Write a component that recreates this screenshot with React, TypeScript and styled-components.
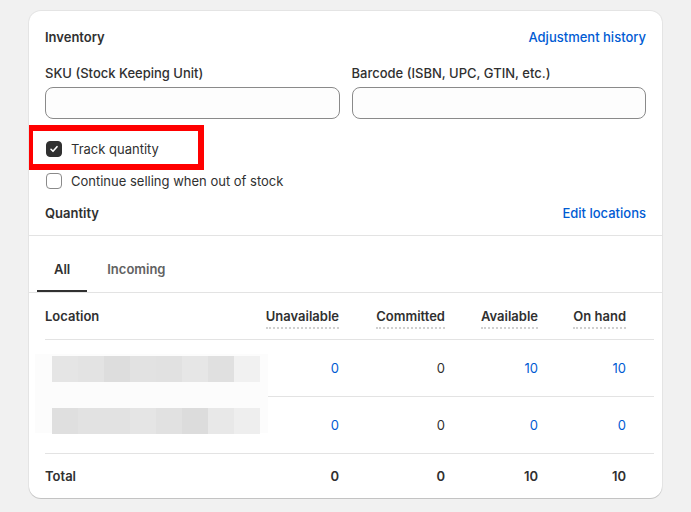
import styled, { createGlobalStyle } from 'styled-components'

const GlobalStyle = createGlobalStyle`
    body {
        margin: 0;
        background: #f1f1f1;
        font-family: Inter, "Noto Sans", sans-serif;
        font-size: 13px;
        line-height: 20px;
        color: #303030;
    }
`

const censorRows = [
    ['#e5e5e5', '#e3e3e3', '#dddddd', '#e2e2e2', '#e1e1e1', '#e6e6e6', '#e0e0e0', '#f1f1f1'],
    ['#dfdfdf', '#e2e2e2', '#e2e2e2', '#e5e5e5', '#e1e1e1', '#dcdcdc', '#e8e8e8', '#eeeeee'],
]

const rows = [
    { unavailable: '0', committed: '0', available: '10', onHand: '10' },
    { unavailable: '0', committed: '0', available: '0', onHand: '0' },
]

const CheckIcon = () => (
    <svg width="12" height="12" viewBox="0 0 12 12" fill="none">
        <path d="M3 6.3l2 2 4-4.6" stroke="#fff" strokeWidth="1.6" strokeLinecap="round" strokeLinejoin="round" />
    </svg>
)

const App = () => {
    return (
        <Page>
            <GlobalStyle />
            <Card>
                <Section>
                    <HeaderRow>
                        <Title>Inventory</Title>
                        <Link href="#">Adjustment history</Link>
                    </HeaderRow>
                    <Fields>
                        <Field>
                            <Label>SKU (Stock Keeping Unit)</Label>
                            <Input />
                        </Field>
                        <Field>
                            <Label>Barcode (ISBN, UPC, GTIN, etc.)</Label>
                            <Input />
                        </Field>
                    </Fields>
                    <CheckRow $first>
                        <Highlight />
                        <Box $checked>
                            <CheckIcon />
                        </Box>
                        Track quantity
                    </CheckRow>
                    <CheckRow>
                        <Box />
                        Continue selling when out of stock
                    </CheckRow>
                    <HeaderRow $spaced>
                        <Title>Quantity</Title>
                        <Link href="#">Edit locations</Link>
                    </HeaderRow>
                </Section>
                <Tabs>
                    <Tab $active>All</Tab>
                    <Tab>Incoming</Tab>
                </Tabs>
                <Table>
                    <HeadRow>
                        <HeadCell $left>Location</HeadCell>
                        <HeadCell><Dotted>Unavailable</Dotted></HeadCell>
                        <HeadCell><Dotted>Committed</Dotted></HeadCell>
                        <HeadCell><Dotted>Available</Dotted></HeadCell>
                        <HeadCell><Dotted>On hand</Dotted></HeadCell>
                    </HeadRow>
                    <Body>
                        <Censor>
                            {censorRows.map((blocks, i) => (
                                <CensorRow key={i} $gap={i > 0}>
                                    {blocks.map((c, j) => (
                                        <Block key={j} $color={c} />
                                    ))}
                                </CensorRow>
                            ))}
                        </Censor>
                        {rows.map((r, i) => (
                            <DataRow key={i}>
                                <Cell />
                                <Cell $link>{r.unavailable}</Cell>
                                <Cell>{r.committed}</Cell>
                                <Cell $link>{r.available}</Cell>
                                <Cell $link>{r.onHand}</Cell>
                            </DataRow>
                        ))}
                    </Body>
                    <TotalRow>
                        <Cell $left>Total</Cell>
                        <Cell>0</Cell>
                        <Cell>0</Cell>
                        <Cell>10</Cell>
                        <Cell>10</Cell>
                    </TotalRow>
                </Table>
            </Card>
        </Page>
    )
}

const Page = styled.div`
    padding: 11px 29px;
`

const Card = styled.div`
    width: 633px;
    background: #fff;
    border-radius: 12px;
    overflow: hidden;
    box-shadow: 0 1px 0 0 rgba(0, 0, 0, 0.14), 0 0 0 1px rgba(0, 0, 0, 0.05);
`

const Section = styled.div`
    padding: 16px 16px 12px;
    border-bottom: 1px solid #e3e3e3;
`

const HeaderRow = styled.div<{ $spaced?: boolean }>`
    display: flex;
    justify-content: space-between;
    align-items: center;
    margin-top: ${(p) => (p.$spaced ? '12px' : '0')};
`

const Title = styled.h2`
    margin: 0;
    font-size: 13px;
    font-weight: 600;
    line-height: 20px;
`

const Link = styled.a`
    color: #005bd3;
    text-decoration: none;
    font-weight: 450;
`

const Fields = styled.div`
    display: grid;
    grid-template-columns: 1fr 1fr;
    gap: 12px;
    margin-top: 16px;
`

const Field = styled.div`
    display: flex;
    flex-direction: column;
    gap: 4px;
`

const Label = styled.label`
    font-weight: 450;
`

const Input = styled.input`
    box-sizing: border-box;
    height: 32px;
    width: 100%;
    border: 1px solid #8a8a8a;
    border-radius: 8px;
    background: #fdfdfd;
    font: inherit;
`

const CheckRow = styled.label<{ $first?: boolean }>`
    position: relative;
    display: flex;
    align-items: center;
    gap: 9px;
    margin-top: ${(p) => (p.$first ? '20px' : '12px')};
`

const Highlight = styled.span`
    position: absolute;
    left: -18px;
    top: -14px;
    width: 177px;
    height: 45px;
    box-sizing: border-box;
    border: 6px solid #ff0000;
`

const Box = styled.span<{ $checked?: boolean }>`
    box-sizing: border-box;
    width: 16px;
    height: 16px;
    margin-left: 1px;
    border-radius: 4px;
    display: flex;
    align-items: center;
    justify-content: center;
    background: ${(p) => (p.$checked ? '#303030' : '#fff')};
    border: 1px solid ${(p) => (p.$checked ? '#303030' : '#8a8a8a')};
`

const Tabs = styled.div`
    display: flex;
    gap: 3px;
    padding: 8px 8px 0;
    border-bottom: 1px solid #e3e3e3;
`

const Tab = styled.div<{ $active?: boolean }>`
    box-sizing: border-box;
    height: 48px;
    padding: 4px 17px 0;
    display: flex;
    align-items: center;
    font-weight: 600;
    color: ${(p) => (p.$active ? '#303030' : '#616161')};
    border-bottom: 2px solid ${(p) => (p.$active ? '#303030' : 'transparent')};
`

const Table = styled.div`
    margin: 0 8px 0 16px;
`

const gridRow = `
    display: grid;
    grid-template-columns: 1fr 100px 106px 93px 88px;
    padding-right: 28px;
    align-items: center;
`

const HeadRow = styled.div`
    ${gridRow}
    height: 46px;
    border-bottom: 1px solid #e3e3e3;
`

const HeadCell = styled.div<{ $left?: boolean }>`
    text-align: ${(p) => (p.$left ? 'left' : 'right')};
    font-weight: 600;
`

const Dotted = styled.span`
    padding-bottom: 3px;
    border-bottom: 2px dotted #d0d0d0;
`

const Body = styled.div`
    position: relative;
`

const DataRow = styled.div`
    ${gridRow}
    height: 56px;
    border-bottom: 1px solid #e3e3e3;
`

const TotalRow = styled.div`
    ${gridRow}
    height: 44px;
    font-weight: 600;
`

const Cell = styled.div<{ $link?: boolean; $left?: boolean }>`
    text-align: ${(p) => (p.$left ? 'left' : 'right')};
    color: ${(p) => (p.$link ? '#005bd3' : '#303030')};
`

const Censor = styled.div`
    position: absolute;
    left: -10px;
    top: 14px;
    width: 233px;
    height: 79px;
    padding: 2px 0 0 17px;
    box-sizing: border-box;
    background: #fcfcfc;
    display: flex;
    flex-direction: column;
`

const CensorRow = styled.div<{ $gap?: boolean }>`
    display: flex;
    margin-top: ${(p) => (p.$gap ? '26px' : '0')};
`

const Block = styled.span<{ $color: string }>`
    width: 26px;
    height: 26px;
    background: ${(p) => p.$color};
`

export default App
